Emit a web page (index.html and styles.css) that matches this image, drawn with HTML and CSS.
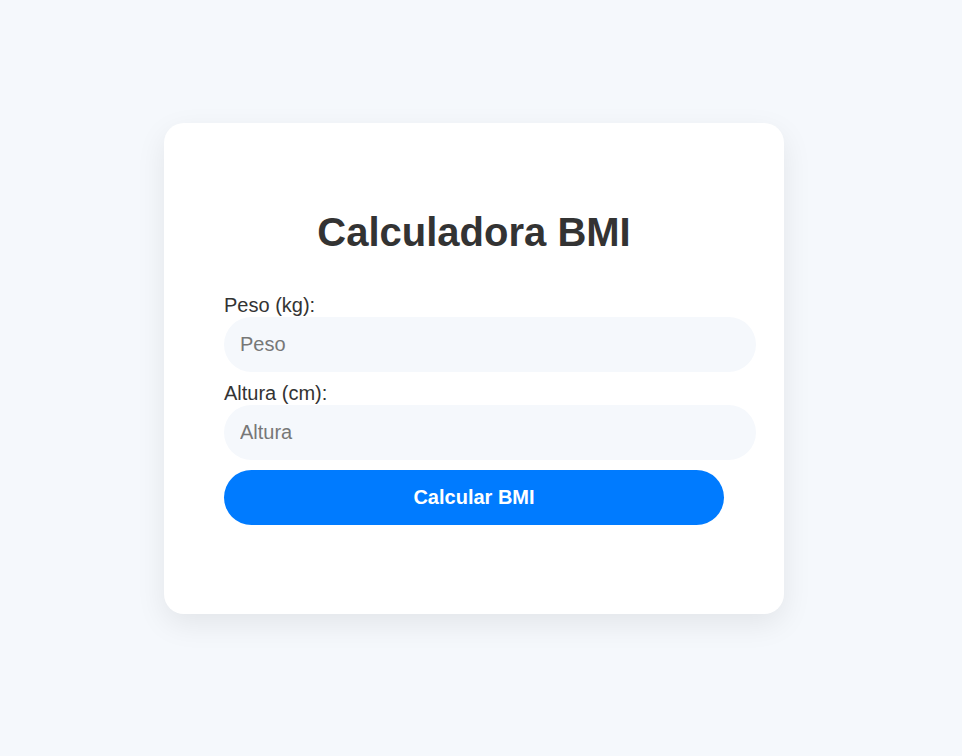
FILE: index.html
```html
<!DOCTYPE html>
<html lang="es">
<head>
<meta charset="utf-8">
<title>Calculadora BMI</title>
<link rel="stylesheet" href="styles.css">
</head>
<body>
<main class="page">
  <section class="card">
    <h1 class="title">Calculadora BMI</h1>
    <form class="form">
      <label class="label" for="peso">Peso (kg):</label>
      <input class="field" id="peso" type="number" placeholder="Peso">
      <label class="label" for="altura">Altura (cm):</label>
      <input class="field" id="altura" type="number" placeholder="Altura">
      <button class="btn" type="button">Calcular BMI</button>
    </form>
  </section>
</main>
</body>
</html>
```

FILE: styles.css
```css
html, body {
  margin: 0;
  padding: 0;
  background: #f5f8fc;
  font-family: "Liberation Sans", Arial, sans-serif;
  color: #333;
}
.page {
  height: 756px;
  box-sizing: border-box;
  padding: 123px 0 0 164px;
}
.card {
  width: 620px;
  height: 491px;
  box-sizing: border-box;
  padding: 60px;
  background: #fff;
  border-radius: 20px;
  box-shadow: 0 10px 30px rgba(0, 0, 0, 0.08);
}
.title {
  margin: 26px 0 39px;
  font-size: 40px;
  line-height: 46px;
  font-weight: 700;
  text-align: center;
  color: #333;
}
.form {
  display: flex;
  flex-direction: column;
  align-items: flex-start;
}
.label {
  font-size: 20px;
  line-height: 23px;
  color: #333;
}
.field {
  width: 532px;
  height: 55px;
  box-sizing: border-box;
  margin: 0 0 10px;
  padding: 0 16px;
  border: none;
  border-radius: 28px;
  background: #f5f8fc;
  font-family: "Liberation Sans", Arial, sans-serif;
  font-size: 20px;
  color: #333;
  outline: none;
}
.field::placeholder {
  color: #777;
}
.btn {
  width: 500px;
  height: 55px;
  border: none;
  border-radius: 28px;
  background: #007bff;
  color: #fff;
  font-family: "Liberation Sans", Arial, sans-serif;
  font-size: 20px;
  font-weight: 700;
  cursor: pointer;
}
```
